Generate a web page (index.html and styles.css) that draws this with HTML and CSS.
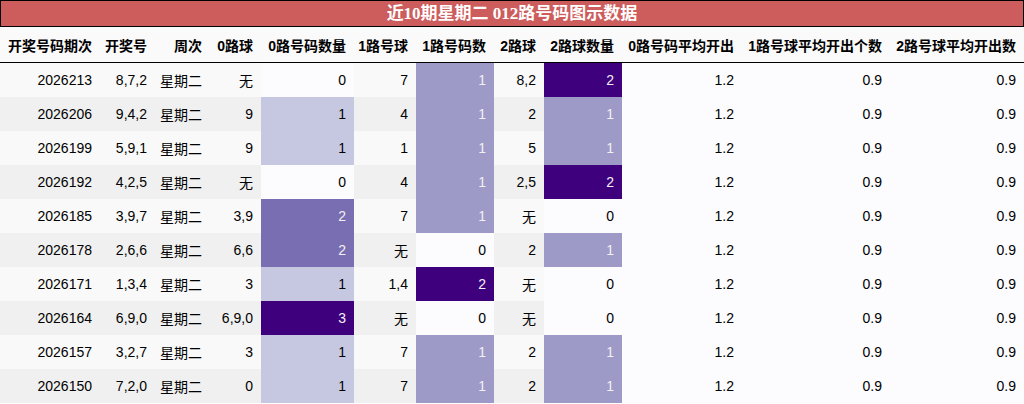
FILE: index.html
```html
<!DOCTYPE html>
<html lang="zh">
<head>
<meta charset="utf-8">
<title>近10期星期二 012路号码图示数据</title>
<link rel="stylesheet" href="styles.css">
</head>
<body>
<table class="data">
  <caption class="title">近10期星期二 012路号码图示数据</caption>
  <colgroup>
    <col class="w1"><col class="w2"><col class="w3"><col class="w4"><col class="w5"><col class="w6">
    <col class="w7"><col class="w8"><col class="w9"><col class="w10"><col class="w11"><col class="w12">
  </colgroup>
  <thead>
    <tr>
      <th>开奖号码期次</th><th>开奖号</th><th>周次</th><th>0路球</th><th>0路号码数量</th><th>1路号球</th>
      <th>1路号码数</th><th>2路球</th><th>2路球数量</th><th>0路号码平均开出</th><th>1路号球平均开出个数</th><th>2路号球平均开出数</th>
    </tr>
  </thead>
  <tbody>
    <tr><td>2026213</td><td>8,7,2</td><td>星期二</td><td>无</td><td class="g0">0</td><td>7</td><td class="g12">1</td><td>8,2</td><td class="gmax">2</td><td class="g0">1.2</td><td class="g0">0.9</td><td class="g0">0.9</td></tr>
    <tr><td>2026206</td><td>9,4,2</td><td>星期二</td><td>9</td><td class="g13">1</td><td>4</td><td class="g12">1</td><td>2</td><td class="g12">1</td><td class="g0">1.2</td><td class="g0">0.9</td><td class="g0">0.9</td></tr>
    <tr><td>2026199</td><td>5,9,1</td><td>星期二</td><td>9</td><td class="g13">1</td><td>1</td><td class="g12">1</td><td>5</td><td class="g12">1</td><td class="g0">1.2</td><td class="g0">0.9</td><td class="g0">0.9</td></tr>
    <tr><td>2026192</td><td>4,2,5</td><td>星期二</td><td>无</td><td class="g0">0</td><td>4</td><td class="g12">1</td><td>2,5</td><td class="gmax">2</td><td class="g0">1.2</td><td class="g0">0.9</td><td class="g0">0.9</td></tr>
    <tr><td>2026185</td><td>3,9,7</td><td>星期二</td><td>3,9</td><td class="g23">2</td><td>7</td><td class="g12">1</td><td>无</td><td class="g0">0</td><td class="g0">1.2</td><td class="g0">0.9</td><td class="g0">0.9</td></tr>
    <tr><td>2026178</td><td>2,6,6</td><td>星期二</td><td>6,6</td><td class="g23">2</td><td>无</td><td class="g0">0</td><td>2</td><td class="g12">1</td><td class="g0">1.2</td><td class="g0">0.9</td><td class="g0">0.9</td></tr>
    <tr><td>2026171</td><td>1,3,4</td><td>星期二</td><td>3</td><td class="g13">1</td><td>1,4</td><td class="gmax">2</td><td>无</td><td class="g0">0</td><td class="g0">1.2</td><td class="g0">0.9</td><td class="g0">0.9</td></tr>
    <tr><td>2026164</td><td>6,9,0</td><td>星期二</td><td>6,9,0</td><td class="gmax">3</td><td>无</td><td class="g0">0</td><td>无</td><td class="g0">0</td><td class="g0">1.2</td><td class="g0">0.9</td><td class="g0">0.9</td></tr>
    <tr><td>2026157</td><td>3,2,7</td><td>星期二</td><td>3</td><td class="g13">1</td><td>7</td><td class="g12">1</td><td>2</td><td class="g12">1</td><td class="g0">1.2</td><td class="g0">0.9</td><td class="g0">0.9</td></tr>
    <tr><td>2026150</td><td>7,2,0</td><td>星期二</td><td>0</td><td class="g13">1</td><td>7</td><td class="g12">1</td><td>2</td><td class="g12">1</td><td class="g0">1.2</td><td class="g0">0.9</td><td class="g0">0.9</td></tr>
  </tbody>
</table>
</body>
</html>
```

FILE: styles.css
```css
html, body {
  margin: 0;
  padding: 0;
  background: #ffffff;
}

.data {
  width: 1024px;
  border-collapse: collapse;
  table-layout: fixed;
  font-family: "Liberation Sans", "Noto Sans CJK SC", sans-serif;
  font-size: 14px;
  color: #000000;
}

.title {
  box-sizing: border-box;
  height: 27px;
  line-height: 25px;
  background: #cd5c5c;
  border: 1px solid #000000;
  color: #ffffff;
  font-family: "Liberation Serif", "Noto Sans CJK SC", serif;
  font-weight: bold;
  font-size: 17px;
  text-align: center;
}

.w1 { width: 100px; }
.w2 { width: 55px; }
.w3 { width: 55px; }
.w4 { width: 51px; }
.w5 { width: 93px; }
.w6 { width: 62px; }
.w7 { width: 78px; }
.w8 { width: 50px; }
.w9 { width: 78px; }
.w10 { width: 120px; }
.w11 { width: 148px; }
.w12 { width: 134px; }

.data th {
  height: 35px;
  padding: 0 8px 0 0;
  text-align: right;
  font-weight: bold;
  background: #fafafa;
  border-bottom: 1px solid #000000;
  white-space: nowrap;
}

.data td {
  height: 34px;
  padding: 0 8px 0 0;
  text-align: right;
  white-space: nowrap;
}

.data tbody tr:nth-child(odd) { background: #f9f9f9; }
.data tbody tr:nth-child(even) { background: #f0f0f0; }

.data td.g0 { background: #fcfbfd; color: #000000; }
.data td.g13 { background: #c6c7e1; color: #000000; }
.data td.g12 { background: #9e9ac8; color: #f1f1f1; }
.data td.g23 { background: #796eb2; color: #f1f1f1; }
.data td.gmax { background: #3f007d; color: #f1f1f1; }
```
